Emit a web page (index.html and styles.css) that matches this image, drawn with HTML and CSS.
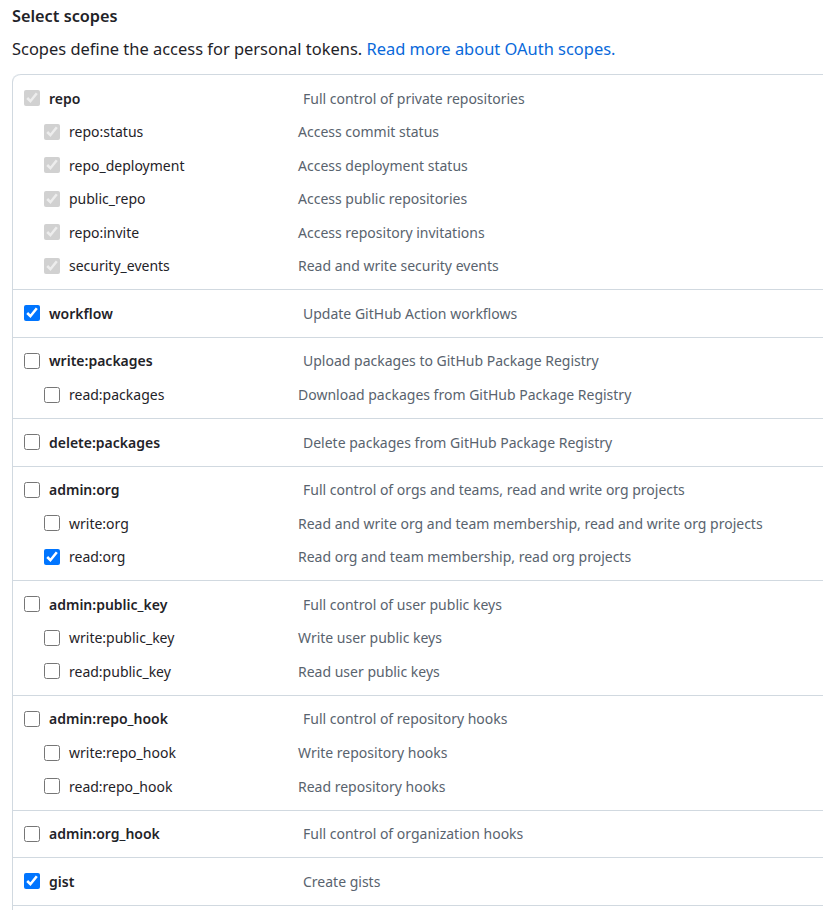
FILE: index.html
```html
<!DOCTYPE html>
<html lang="en">
<head>
<meta charset="utf-8">
<title>Select scopes</title>
<link rel="stylesheet" href="styles.css">
</head>
<body>
<div class="page">
  <h3 class="title">Select scopes</h3>
  <p class="lead">Scopes define the access for personal tokens. <a href="#">Read more about OAuth scopes.</a></p>
  <div class="box">
    <div class="group">
      <div class="row top"><label class="scope"><input type="checkbox" checked disabled><span>repo</span></label><span class="desc">Full control of private repositories</span></div>
      <div class="row child"><label class="scope"><input type="checkbox" checked disabled><span>repo:status</span></label><span class="desc">Access commit status</span></div>
      <div class="row child"><label class="scope"><input type="checkbox" checked disabled><span>repo_deployment</span></label><span class="desc">Access deployment status</span></div>
      <div class="row child"><label class="scope"><input type="checkbox" checked disabled><span>public_repo</span></label><span class="desc">Access public repositories</span></div>
      <div class="row child"><label class="scope"><input type="checkbox" checked disabled><span>repo:invite</span></label><span class="desc">Access repository invitations</span></div>
      <div class="row child"><label class="scope"><input type="checkbox" checked disabled><span>security_events</span></label><span class="desc">Read and write security events</span></div>
    </div>
    <div class="group">
      <div class="row top"><label class="scope"><input type="checkbox" checked><span>workflow</span></label><span class="desc">Update GitHub Action workflows</span></div>
    </div>
    <div class="group">
      <div class="row top"><label class="scope"><input type="checkbox"><span>write:packages</span></label><span class="desc">Upload packages to GitHub Package Registry</span></div>
      <div class="row child"><label class="scope"><input type="checkbox"><span>read:packages</span></label><span class="desc">Download packages from GitHub Package Registry</span></div>
    </div>
    <div class="group">
      <div class="row top"><label class="scope"><input type="checkbox"><span>delete:packages</span></label><span class="desc">Delete packages from GitHub Package Registry</span></div>
    </div>
    <div class="group">
      <div class="row top"><label class="scope"><input type="checkbox"><span>admin:org</span></label><span class="desc">Full control of orgs and teams, read and write org projects</span></div>
      <div class="row child"><label class="scope"><input type="checkbox"><span>write:org</span></label><span class="desc">Read and write org and team membership, read and write org projects</span></div>
      <div class="row child"><label class="scope"><input type="checkbox" checked><span>read:org</span></label><span class="desc">Read org and team membership, read org projects</span></div>
    </div>
    <div class="group">
      <div class="row top"><label class="scope"><input type="checkbox"><span>admin:public_key</span></label><span class="desc">Full control of user public keys</span></div>
      <div class="row child"><label class="scope"><input type="checkbox"><span>write:public_key</span></label><span class="desc">Write user public keys</span></div>
      <div class="row child"><label class="scope"><input type="checkbox"><span>read:public_key</span></label><span class="desc">Read user public keys</span></div>
    </div>
    <div class="group">
      <div class="row top"><label class="scope"><input type="checkbox"><span>admin:repo_hook</span></label><span class="desc">Full control of repository hooks</span></div>
      <div class="row child"><label class="scope"><input type="checkbox"><span>write:repo_hook</span></label><span class="desc">Write repository hooks</span></div>
      <div class="row child"><label class="scope"><input type="checkbox"><span>read:repo_hook</span></label><span class="desc">Read repository hooks</span></div>
    </div>
    <div class="group">
      <div class="row top"><label class="scope"><input type="checkbox"><span>admin:org_hook</span></label><span class="desc">Full control of organization hooks</span></div>
    </div>
    <div class="group last">
      <div class="row top"><label class="scope"><input type="checkbox" checked><span>gist</span></label><span class="desc">Create gists</span></div>
    </div>
  </div>
</div>
</body>
</html>
```

FILE: styles.css
```css
html, body {
  margin: 0;
  padding: 0;
  background: #ffffff;
  overflow: hidden;
}

body {
  font-family: "Noto Sans", "Open Sans", sans-serif;
  color: #1f2328;
}

.page {
  padding: 4px 0 0 12px;
  display: flex;
  flex-direction: column;
}

.title {
  margin: 0;
  font-size: 16.3px;
  font-weight: 600;
  line-height: 24px;
}

.lead {
  margin: 9px 0 0;
  font-size: 16.45px;
  line-height: 24px;
  color: #1f2328;
  white-space: nowrap;
}

.lead a {
  color: #0969da;
  text-decoration: none;
}

.box {
  margin-top: 13px;
  width: 860px;
  padding-bottom: 20px;
  border-left: 1px solid #d1d9e0;
  border-top-left-radius: 8px;
}

.group {
  border-top: 1px solid #d1d9e0;
  padding: 13px 0 13.5px 11px;
  display: flex;
  flex-direction: column;
}

.group.last {
  border-bottom: 1px solid #d1d9e0;
}

.box .group:first-child {
  border-top-left-radius: 8px;
}

.row {
  display: flex;
  align-items: center;
  height: 20px;
  font-size: 14px;
  white-space: nowrap;
}

.row.child {
  margin-top: 13.6px;
  padding-left: 20px;
}

.scope {
  display: flex;
  align-items: center;
  gap: 9px;
  width: 279px;
  flex: none;
}

.row.child .scope {
  width: 254px;
}

.row.top .scope span {
  font-weight: 600;
}

.scope input {
  margin: 0;
  width: 16px;
  height: 16px;
  flex: none;
}

.desc {
  color: #59636e;
}
```
